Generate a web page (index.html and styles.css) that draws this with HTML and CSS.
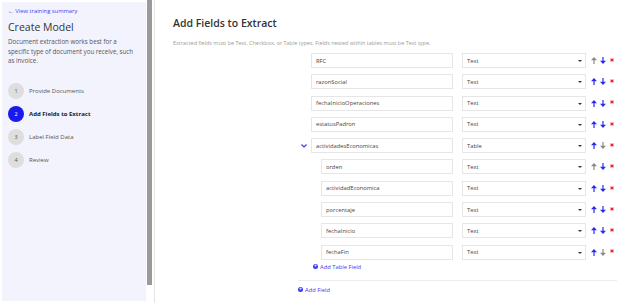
FILE: index.html
```html
<!DOCTYPE html>
<html lang="en">
<head>
  <meta charset="UTF-8">
  <meta name="viewport" content="width=device-width, initial-scale=1.0">
  <title>Create Model</title>
  <link rel="stylesheet" href="styles.css">
</head>
<body>
  <div class="page">
    <div class="sidebar">
      <a href="#" class="back-link">&larr; View training summary</a>
      <h1 class="side-title">Create Model</h1>
      <p class="side-desc">Document extraction works best for a specific type of document you receive, such as invoice.</p>
      <ul class="steps">
        <li class="step"><span class="step-num">1</span>Provide Documents</li>
        <li class="step active"><span class="step-num">2</span>Add Fields to Extract</li>
        <li class="step"><span class="step-num">3</span>Label Field Data</li>
        <li class="step"><span class="step-num">4</span>Review</li>
      </ul>
    </div>
    <div class="scroll-track"><div class="scroll-thumb"></div></div>

    <div class="main">
      <h2 class="main-title">Add Fields to Extract</h2>
      <p class="main-desc">Extracted fields must be Text, Checkbox, or Table types. Fields nested within tables must be Text type.</p>

      <div class="fields">
        <div class="row">
          <span class="toggle"></span>
          <input class="field-name" type="text" value="RFC">
          <div class="field-type">Text</div>
          <div class="actions">
            <svg class="arrow off" viewBox="0 0 6 7"><path d="M3 0 L6 3.2 H3.6 V7 H2.4 V3.2 H0 Z"/></svg>
            <svg class="arrow" viewBox="0 0 6 7"><path d="M3 7 L6 3.8 H3.6 V0 H2.4 V3.8 H0 Z"/></svg>
            <span class="del">&#10006;</span>
          </div>
        </div>
        <div class="row">
          <span class="toggle"></span>
          <input class="field-name" type="text" value="razonSocial">
          <div class="field-type">Text</div>
          <div class="actions">
            <svg class="arrow" viewBox="0 0 6 7"><path d="M3 0 L6 3.2 H3.6 V7 H2.4 V3.2 H0 Z"/></svg>
            <svg class="arrow" viewBox="0 0 6 7"><path d="M3 7 L6 3.8 H3.6 V0 H2.4 V3.8 H0 Z"/></svg>
            <span class="del">&#10006;</span>
          </div>
        </div>
        <div class="row">
          <span class="toggle"></span>
          <input class="field-name" type="text" value="fechaInicioOperaciones">
          <div class="field-type">Text</div>
          <div class="actions">
            <svg class="arrow" viewBox="0 0 6 7"><path d="M3 0 L6 3.2 H3.6 V7 H2.4 V3.2 H0 Z"/></svg>
            <svg class="arrow" viewBox="0 0 6 7"><path d="M3 7 L6 3.8 H3.6 V0 H2.4 V3.8 H0 Z"/></svg>
            <span class="del">&#10006;</span>
          </div>
        </div>
        <div class="row">
          <span class="toggle"></span>
          <input class="field-name" type="text" value="estatusPadron">
          <div class="field-type">Text</div>
          <div class="actions">
            <svg class="arrow" viewBox="0 0 6 7"><path d="M3 0 L6 3.2 H3.6 V7 H2.4 V3.2 H0 Z"/></svg>
            <svg class="arrow" viewBox="0 0 6 7"><path d="M3 7 L6 3.8 H3.6 V0 H2.4 V3.8 H0 Z"/></svg>
            <span class="del">&#10006;</span>
          </div>
        </div>
        <div class="row">
          <span class="toggle">
            <svg width="6" height="4" viewBox="0 0 6 4"><path d="M0.5 0.5 L3 3 L5.5 0.5" fill="none" stroke="#3b3bf0" stroke-width="1.2"/></svg>
          </span>
          <input class="field-name" type="text" value="actividadesEconomicas">
          <div class="field-type">Table</div>
          <div class="actions">
            <svg class="arrow" viewBox="0 0 6 7"><path d="M3 0 L6 3.2 H3.6 V7 H2.4 V3.2 H0 Z"/></svg>
            <svg class="arrow off" viewBox="0 0 6 7"><path d="M3 7 L6 3.8 H3.6 V0 H2.4 V3.8 H0 Z"/></svg>
            <span class="del">&#10006;</span>
          </div>
        </div>

        <div class="row nested">
          <span class="toggle"></span>
          <input class="field-name" type="text" value="orden">
          <div class="field-type">Text</div>
          <div class="actions">
            <svg class="arrow off" viewBox="0 0 6 7"><path d="M3 0 L6 3.2 H3.6 V7 H2.4 V3.2 H0 Z"/></svg>
            <svg class="arrow" viewBox="0 0 6 7"><path d="M3 7 L6 3.8 H3.6 V0 H2.4 V3.8 H0 Z"/></svg>
            <span class="del">&#10006;</span>
          </div>
        </div>
        <div class="row nested">
          <span class="toggle"></span>
          <input class="field-name" type="text" value="actividadEconomica">
          <div class="field-type">Text</div>
          <div class="actions">
            <svg class="arrow" viewBox="0 0 6 7"><path d="M3 0 L6 3.2 H3.6 V7 H2.4 V3.2 H0 Z"/></svg>
            <svg class="arrow" viewBox="0 0 6 7"><path d="M3 7 L6 3.8 H3.6 V0 H2.4 V3.8 H0 Z"/></svg>
            <span class="del">&#10006;</span>
          </div>
        </div>
        <div class="row nested">
          <span class="toggle"></span>
          <input class="field-name" type="text" value="porcentaje">
          <div class="field-type">Text</div>
          <div class="actions">
            <svg class="arrow" viewBox="0 0 6 7"><path d="M3 0 L6 3.2 H3.6 V7 H2.4 V3.2 H0 Z"/></svg>
            <svg class="arrow" viewBox="0 0 6 7"><path d="M3 7 L6 3.8 H3.6 V0 H2.4 V3.8 H0 Z"/></svg>
            <span class="del">&#10006;</span>
          </div>
        </div>
        <div class="row nested">
          <span class="toggle"></span>
          <input class="field-name" type="text" value="fechaInicio">
          <div class="field-type">Text</div>
          <div class="actions">
            <svg class="arrow" viewBox="0 0 6 7"><path d="M3 0 L6 3.2 H3.6 V7 H2.4 V3.2 H0 Z"/></svg>
            <svg class="arrow" viewBox="0 0 6 7"><path d="M3 7 L6 3.8 H3.6 V0 H2.4 V3.8 H0 Z"/></svg>
            <span class="del">&#10006;</span>
          </div>
        </div>
        <div class="row nested">
          <span class="toggle"></span>
          <input class="field-name" type="text" value="fechaFin">
          <div class="field-type">Text</div>
          <div class="actions">
            <svg class="arrow" viewBox="0 0 6 7"><path d="M3 0 L6 3.2 H3.6 V7 H2.4 V3.2 H0 Z"/></svg>
            <svg class="arrow off" viewBox="0 0 6 7"><path d="M3 7 L6 3.8 H3.6 V0 H2.4 V3.8 H0 Z"/></svg>
            <span class="del">&#10006;</span>
          </div>
        </div>

        <a href="#" class="add-link table-add"><span class="plus">+</span>Add Table Field</a>
        <div class="divider"></div>
        <a href="#" class="add-link"><span class="plus">+</span>Add Field</a>
      </div>
    </div>
  </div>
</body>
</html>
```

FILE: styles.css
```css
body {
  margin: 0;
  font-family: "Open Sans", "Noto Sans", sans-serif;
  background-color: #fff;
  color: #333;
}
.page {
  display: flex;
  height: 303px;
  overflow: hidden;
}
.sidebar {
  width: 138px;
  height: 294px;
  margin: 2px 0 0 2px;
  padding: 5px 0 0 6px;
  background-color: #f3f3fd;
}
.back-link {
  display: block;
  font-size: 5.8px;
  color: #4040f0;
  text-decoration: none;
  line-height: 8px;
}
.side-title {
  margin: 5px 0 0 0;
  font-size: 10.5px;
  font-weight: 400;
  line-height: 14px;
  color: #333;
}
.side-desc {
  margin: 3px 0 0 0;
  width: 130px;
  font-size: 6.2px;
  line-height: 9.5px;
  color: #555;
}
.steps {
  list-style: none;
  margin: 17px 0 0 0;
  padding: 0;
  display: flex;
  flex-direction: column;
  gap: 7px;
}
.step {
  display: flex;
  align-items: center;
  gap: 5px;
  font-size: 6px;
  color: #555;
}
.step-num {
  width: 16px;
  height: 16px;
  border-radius: 50%;
  background-color: #dedede;
  display: flex;
  align-items: center;
  justify-content: center;
  font-size: 5.5px;
  color: #555;
}
.step.active {
  font-weight: 700;
  color: #222;
}
.step.active .step-num {
  background-color: #1a1aec;
  color: #fff;
  font-weight: 400;
}
.scroll-track {
  width: 7px;
  margin-left: 1px;
  border-right: 1px solid #e4e4e4;
}
.scroll-thumb {
  width: 5px;
  height: 285px;
  background-color: #9a9a9a;
}
.main {
  flex: 1;
  padding: 16px 0 0 18px;
}
.main-title {
  margin: 0;
  font-size: 10.5px;
  font-weight: 600;
  line-height: 14px;
  color: #333;
}
.main-desc {
  margin: 9px 0 0 0;
  font-size: 5.45px;
  color: #9a9a9a;
  line-height: 8px;
}
.fields {
  margin: 6px 0 0 125px;
  width: 319px;
}
.row {
  display: flex;
  align-items: center;
  height: 15px;
  margin-bottom: 6.3px;
}
.toggle {
  width: 13px;
  display: flex;
  align-items: center;
  padding-left: 3px;
  box-sizing: border-box;
}
.field-name {
  width: 142px;
  height: 15px;
  box-sizing: border-box;
  border: 1px solid #e6e6e6;
  padding: 0 4px;
  font-family: "Open Sans", "Noto Sans", sans-serif;
  font-size: 5.8px;
  color: #444;
  outline: none;
}
.nested .field-name {
  margin-left: 10px;
  width: 132px;
}
.field-type {
  width: 124px;
  height: 15px;
  margin-left: 9px;
  box-sizing: border-box;
  border: 1px solid #e6e6e6;
  padding: 0 4px;
  font-size: 5.8px;
  color: #444;
  display: flex;
  align-items: center;
  position: relative;
}
.field-type::after {
  content: "";
  position: absolute;
  right: 3px;
  top: 6px;
  border-left: 2px solid transparent;
  border-right: 2px solid transparent;
  border-top: 2px solid #333;
}
.actions {
  display: flex;
  align-items: center;
  gap: 3px;
  margin-left: 5px;
  line-height: 1;
}
.arrow {
  width: 6px;
  height: 7px;
  fill: #2b2bf0;
}
.arrow.off {
  fill: #8a8a8a;
}
.del {
  width: 6px;
  text-align: center;
  font-family: "DejaVu Sans", sans-serif;
  color: #e0183c;
  font-size: 5.5px;
}
.add-link {
  display: flex;
  align-items: center;
  gap: 2px;
  font-size: 5.8px;
  color: #3b3bf0;
  text-decoration: none;
}
.add-link.table-add {
  margin: -3px 0 0 15px;
}
.plus {
  width: 5px;
  height: 5px;
  border-radius: 50%;
  background-color: #3b3bf0;
  color: #fff;
  font-size: 5px;
  font-weight: 700;
  line-height: 5px;
  text-align: center;
}
.divider {
  height: 1px;
  background-color: #ececec;
  margin: 9px 0 5px 0;
}
```
